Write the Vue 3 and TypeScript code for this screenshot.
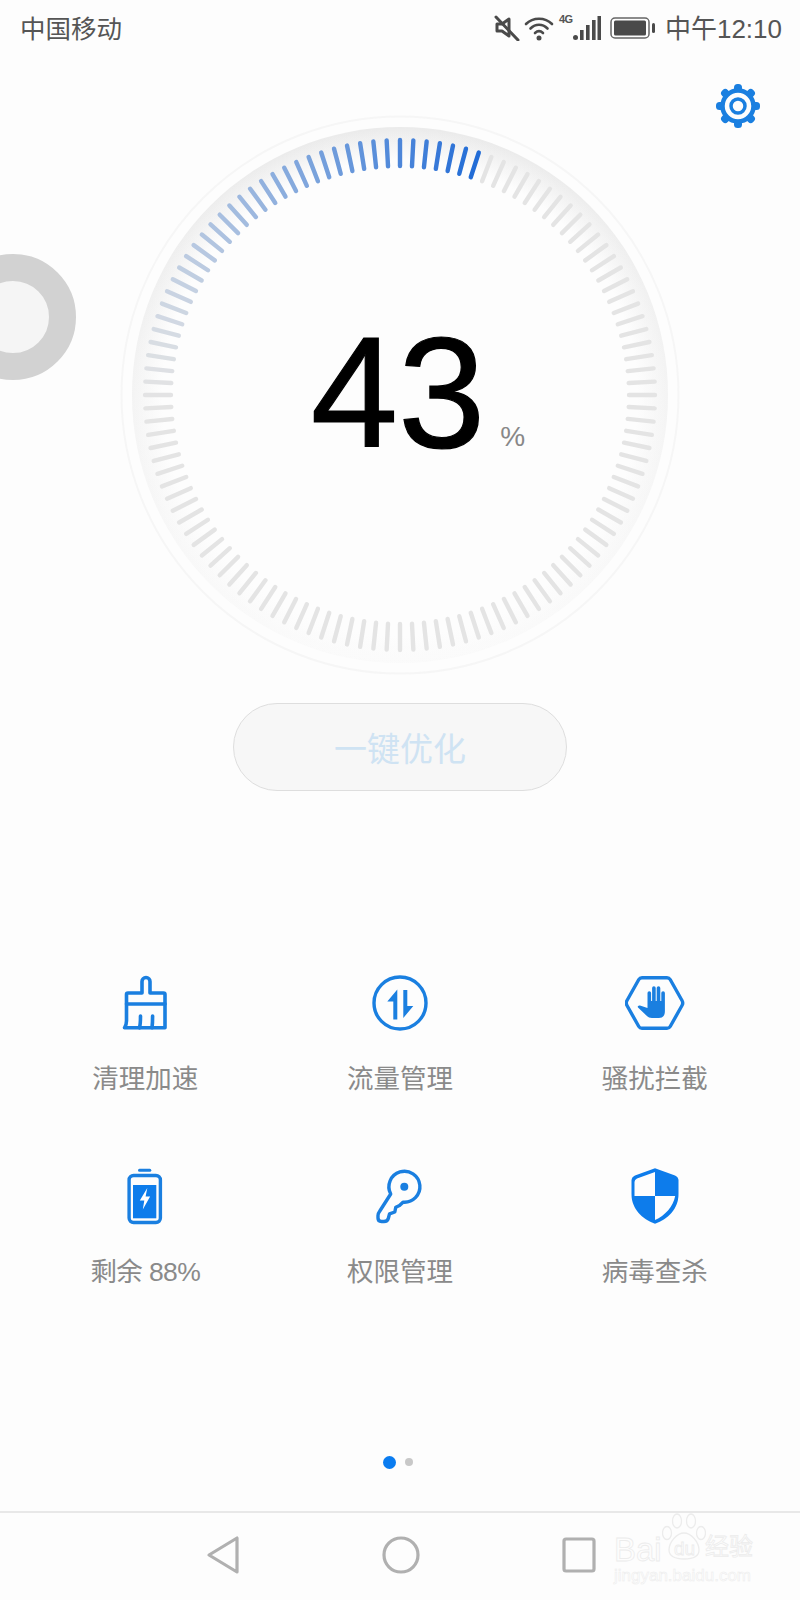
<template>
  <div class="screen">
    <!-- status bar -->
    <div class="status">
      <span class="carrier">中国移动</span>
      <div class="status-right">
        <svg class="ic-mute" width="26" height="26" viewBox="0 0 26 26">
          <path d="M3 9h5l7-5v17l-7-5H3z" fill="none" stroke="#4a4a4a" stroke-width="3" stroke-linejoin="round" />
          <path d="M2 2l22 23" stroke="#4a4a4a" stroke-width="3" stroke-linecap="round" />
        </svg>
        <svg class="ic-wifi" width="30" height="26" viewBox="0 0 30 26">
          <path d="M2 9c7-7 19-7 26 0M6.500 13.500c5-5 12-5 17 0M11 18c2.500-2.300 5.500-2.300 8 0" fill="none" stroke="#4a4a4a" stroke-width="2.600" stroke-linecap="round" />
          <circle cx="15" cy="23" r="2.500" fill="#4a4a4a" />
        </svg>
        <div class="signal">
          <span class="sig-label">4G</span>
          <svg width="28" height="26" viewBox="0 0 28 26">
            <circle cx="2.500" cy="22.500" r="2.500" fill="#4a4a4a" />
            <rect x="7" y="15" width="3.600" height="10" fill="#4a4a4a" />
            <rect x="13" y="10" width="3.600" height="15" fill="#4a4a4a" />
            <rect x="19" y="5" width="3.600" height="20" fill="#4a4a4a" />
            <rect x="24.500" y="1" width="3.500" height="24" fill="#4a4a4a" />
          </svg>
        </div>
        <svg class="ic-batt" width="46" height="24" viewBox="0 0 46 24">
          <rect x="1" y="2" width="38" height="20" rx="4" fill="none" stroke="#666" stroke-width="1.500" />
          <rect x="4" y="4.500" width="32" height="15" rx="1.500" fill="#4a4a4a" />
          <rect x="42" y="7" width="3" height="10" rx="1.500" fill="#4a4a4a" />
        </svg>
        <span class="clock">中午12:10</span>
      </div>
    </div>

    <!-- settings -->
    <div class="gear-row">
      <svg width="46" height="46" viewBox="0 0 46 46">
        <g fill="#1a7fe0">
          <rect v-for="a in gearTeeth" :key="a" x="19" y="1" width="8" height="8" rx="3.500" :transform="`rotate(${a} 23 23)`" />
        </g>
        <circle cx="23" cy="23" r="15.500" fill="none" stroke="#1a7fe0" stroke-width="4.500" />
        <circle cx="23" cy="23" r="7" fill="none" stroke="#1a7fe0" stroke-width="3.500" />
      </svg>
    </div>

    <!-- dial -->
    <div class="dial">
      <svg width="560" height="560" viewBox="0 0 560 560">
        <defs>
          <linearGradient id="bandBase" x1="0" y1="0" x2="0" y2="1">
            <stop offset="0" stop-color="#ebebeb" />
            <stop offset="0.5" stop-color="#f3f3f3" />
            <stop offset="1" stop-color="#fafafa" />
          </linearGradient>
          <radialGradient id="bandFade" gradientUnits="userSpaceOnUse" cx="280" cy="283" r="270">
            <stop offset="0.88" stop-color="#fdfdfd" />
            <stop offset="1" stop-color="#fdfdfd" stop-opacity="0" />
          </radialGradient>
        </defs>
        <circle cx="280" cy="280" r="278.500" fill="none" stroke="#f6f6f6" stroke-width="2" />
        <circle cx="280" cy="280" r="268" fill="url(#bandBase)" />
        <circle cx="280" cy="280" r="268" fill="url(#bandFade)" />
        <line
          v-for="t in ticks"
          :key="t.angle"
          x1="280"
          y1="25"
          x2="280"
          y2="51"
          :stroke="t.color"
          stroke-width="4.400"
          stroke-linecap="round"
          :transform="`rotate(${t.angle} 280 280)`"
        />
      </svg>
      <div class="reading">
        <span class="num">43</span>
        <span class="pct">%</span>
      </div>
    </div>

    <button class="optimize">一键优化</button>

    <!-- tools -->
    <div class="tools">
      <div class="tool">
        <svg width="60" height="60" viewBox="0 0 60 60" fill="none" stroke="#1a7fe0" stroke-width="3.600" stroke-linejoin="round" stroke-linecap="round">
          <g transform="translate(1 0)">
            <path d="M26 20V8.500a4 4 0 0 1 8 0V20h13.500a1.500 1.500 0 0 1 1.500 1.500V54.800H8.500c1.600-2 2-4 2-7V21.500A1.500 1.500 0 0 1 12 20z" />
            <path d="M10.500 31H49M23.500 54.800c.8-3 1-6 1-11.800M36 54.800c.4-3 .6-6 .6-11.800" />
          </g>
        </svg>
        <span>清理加速</span>
      </div>
      <div class="tool">
        <svg width="60" height="60" viewBox="0 0 60 60">
          <circle cx="30" cy="30" r="26" fill="none" stroke="#1a7fe0" stroke-width="3.400" />
          <path d="M27.300 16.500V46.500h-4V28.500h-6z" fill="#1a7fe0" />
          <path d="M33.300 45V17h4V33h6z" fill="#1a7fe0" />
        </svg>
        <span>流量管理</span>
      </div>
      <div class="tool">
        <svg width="60" height="60" viewBox="0 0 60 60">
          <g transform="translate(-1 0)" fill="#1a7fe0">
            <path d="M18 4.700h25c1.500 0 2.500.6 3.200 1.800L58 27.500c1 1.700 1 3.300 0 5L46.200 53.500c-.7 1.200-1.700 1.800-3.200 1.800H18c-1.500 0-2.500-.6-3.200-1.800L3 32.500c-1-1.700-1-3.300 0-5L14.800 6.500c.7-1.200 1.700-1.800 3.200-1.800z" fill="none" stroke="#1a7fe0" stroke-width="3.400" />
            <path d="M23.500 35V20a1.800 1.800 0 0 1 3.600 0v8h1V15a1.800 1.800 0 0 1 3.600 0v13h1V15a1.800 1.800 0 0 1 3.600 0v13h1V20a1.800 1.800 0 0 1 3.600 0v18c0 4-1.500 7-6 7h-7c-2.500 0-4-1-5.500-2.500L14 34.500c-1-1.200.7-2.500 2-2z" />
          </g>
        </svg>
        <span>骚扰拦截</span>
      </div>
      <div class="tool">
        <svg width="60" height="60" viewBox="0 0 60 60">
          <g transform="translate(1.300 0)">
            <rect x="21.700" y="2.700" width="13.300" height="3" rx="1.500" fill="#1a7fe0" />
            <rect x="12.800" y="9.500" width="31.300" height="47" rx="4.500" fill="none" stroke="#1a7fe0" stroke-width="3.400" />
            <rect x="16.700" y="19" width="23.300" height="33.300" fill="#0d7ceb" />
            <path d="M31 22L23.500 34.500H28L26.500 43.500L33.800 30.500H29.300z" fill="#fff" />
          </g>
        </svg>
        <span class="tight">剩余 88%</span>
      </div>
      <div class="tool">
        <svg width="60" height="60" viewBox="0 0 60 60">
          <path d="M20.700 28L9.500 45.500Q8 47.500 8 49.500V52Q8 55.500 11.500 55.500H14Q17.500 55.500 18.300 52.500L19.500 47.800L24.800 46L25.800 41.200L29.500 39.500L33 36.200A15.500 15.500 0 1 0 20.700 28z" fill="none" stroke="#1a7fe0" stroke-width="3.400" stroke-linejoin="round" />
          <circle cx="34.300" cy="20.700" r="4" fill="#1a7fe0" />
        </svg>
        <span>权限管理</span>
      </div>
      <div class="tool">
        <svg width="60" height="60" viewBox="0 0 60 60">
          <path d="M30 2.300L50 9.500Q53.500 11 53.500 14.500V28C53.500 43 43 53 30 57.700C17 53 6.500 43 6.500 28V14.500Q6.500 11 10 9.500z" fill="#0d7ceb" />
          <path d="M30 6L12 12.500Q9.500 13.500 9.500 16V30H30zM30 30H50.200C48 41 40 49.500 30 54z" fill="#fdfdfd" />
        </svg>
        <span>病毒查杀</span>
      </div>
    </div>

    <!-- page dots -->
    <div class="dots">
      <i class="dot-on"></i>
      <i class="dot-off"></i>
    </div>

    <!-- nav bar -->
    <div class="nav">
      <svg width="36" height="40" viewBox="0 0 36 40" fill="none" stroke="#b0b0b0" stroke-width="3.200" stroke-linejoin="round">
        <path d="M32 3v34L4 20z" />
      </svg>
      <svg width="38" height="40" viewBox="0 0 38 40" fill="none" stroke="#b0b0b0" stroke-width="3.200">
        <circle cx="19" cy="20" r="17" />
      </svg>
      <svg width="36" height="40" viewBox="0 0 36 40" fill="none" stroke="#b0b0b0" stroke-width="3.200" stroke-linejoin="round">
        <rect x="3" y="4" width="30" height="32" rx="2" />
      </svg>
      <!-- baidu jingyan watermark -->
      <div class="mark">
        <svg class="paw" width="44" height="48" viewBox="0 0 44 48" fill="none" stroke="#ececec" stroke-width="1.300">
          <ellipse cx="5" cy="20" rx="4.500" ry="6.500" />
          <ellipse cx="15" cy="8" rx="4.500" ry="7" />
          <ellipse cx="29" cy="8" rx="4.500" ry="7" />
          <ellipse cx="39" cy="20" rx="4.500" ry="6.500" />
          <path d="M22 20c7 0 15 9 15 17 0 6-6 9-15 9S7 43 7 37c0-8 8-17 15-17z" />
        </svg>
        <div class="mark-bai">Bai</div>
        <div class="mark-du">du</div>
        <div class="mark-cn">经验</div>
        <div class="mark-url">jingyan.baidu.com</div>
      </div>
    </div>

    <!-- floating ball -->
    <div class="ball"></div>
  </div>
</template>

<script setup lang="ts">
const gearTeeth = [0, 45, 90, 135, 180, 225, 270, 315]

const total = 120
const lastBlue = 6 // ticks to the right of 12 o'clock
const fadeLen = 31 // ticks left of top that stay fading

// mixes grey tick colour towards the blue as it nears the end of the arc
const mix = (k: number) => {
  const from = [228, 228, 228]
  const to = [34, 108, 214]
  const c = from.map((v, i) => Math.round(v + (to[i] - v) * k))
  return `rgb(${c[0]},${c[1]},${c[2]})`
}

const ticks = Array.from({ length: total }, (_, i) => {
  // i=0 is straight up, counted clockwise
  const off = i > total / 2 ? i - total : i
  let color = '#e4e4e4'
  if (off <= lastBlue && off >= -fadeLen) {
    const k = (off + fadeLen) / (lastBlue + fadeLen)
    color = mix(Math.pow(k, 1.4))
  }
  return { angle: i * 3, color }
})
</script>

<style scoped>
.screen {
  position: relative;
  width: 800px;
  height: 1600px;
  overflow: hidden;
  background: #fdfdfd;
  font-family: "Liberation Sans", "Noto Sans CJK SC", sans-serif;
}
.status {
  height: 56px;
  padding: 0 18px 0 20px;
  display: flex;
  align-items: center;
  justify-content: space-between;
  color: #555;
}
.carrier {
  font-size: 25.500px;
  margin-bottom: 3px;
}
.clock {
  font-size: 26px;
  margin-bottom: 3px;
}
.status-right {
  display: flex;
  align-items: center;
}
.ic-mute { margin-right: 4px; }
.ic-wifi { margin-right: 5px; }
.signal { position: relative; margin-right: 9px; padding-left: 14px; display: flex; }
.sig-label {
  position: absolute;
  left: 0;
  top: -2px;
  font-size: 11px;
  font-weight: 700;
  letter-spacing: -0.500px;
}
.ic-batt { margin-right: 9px; }
.gear-row {
  display: flex;
  justify-content: flex-end;
  height: 59px;
  padding-right: 39px;
  padding-top: 27px;
  box-sizing: border-box;
}
.dial {
  position: relative;
  width: 560px;
  height: 560px;
  margin: 0 auto;
}
.dial svg { display: block; }
.reading {
  position: absolute;
  left: 0;
  right: 0;
  top: 0;
  bottom: 0;
  display: flex;
  align-items: center;
  justify-content: center;
}
.num {
  font-size: 157px;
  line-height: 1;
  color: #000;
  -webkit-text-stroke: 1.200px #000;
  margin: -6px 0 0 -2px;
}
.pct {
  font-size: 28px;
  color: #888;
  align-self: center;
  margin: 84px -38px 0 15px;
}
.optimize {
  display: block;
  width: 334px;
  height: 88px;
  margin: 28px auto 0;
  border: 1.500px solid #dedede;
  border-radius: 44px;
  background: #f7f7f7;
  color: #cfe3f3;
  font-family: inherit;
  font-size: 33px;
  padding: 0;
}
.tools {
  display: grid;
  grid-template-columns: 1fr 1fr 1fr;
  row-gap: 39px;
  margin-top: 182px;
  padding: 0 18px;
}
.tool {
  display: flex;
  flex-direction: column;
  align-items: center;
  height: 154px;
  color: #8a8a8a;
  font-size: 26.500px;
  white-space: nowrap;
}
.tool svg { margin-bottom: 24px; }
.tight { letter-spacing: -0.600px; }
.dots {
  display: flex;
  justify-content: center;
  align-items: center;
  gap: 9.500px;
  margin-top: 135px;
  height: 14px;
  padding-right: 4.500px;
}
.dot-on {
  width: 13px;
  height: 13px;
  border-radius: 50%;
  background: #0a7cf0;
}
.dot-off {
  width: 8px;
  height: 8px;
  border-radius: 50%;
  background: #c8c8c8;
}
.nav {
  position: relative;
  margin-top: 42px;
  height: 84px;
  padding-bottom: 4px;
  border-top: 2px solid #e8e8e8;
  display: flex;
  align-items: center;
  padding-left: 205px;
  gap: 141px;
}
.mark {
  position: absolute;
  left: 614px;
  top: 0;
  width: 140px;
  height: 74px;
  color: #fdfdfd;
  -webkit-text-stroke: 0.800px #ececec;
  white-space: nowrap;
}
.paw { position: absolute; left: 48px; top: 0; }
.mark-bai {
  position: absolute;
  left: 0;
  top: 20px;
  font-size: 33px;
  line-height: 1;
}
.mark-du {
  position: absolute;
  left: 60px;
  top: 26px;
  font-size: 19px;
  line-height: 1;
}
.mark-cn {
  position: absolute;
  left: 91px;
  top: 22px;
  font-size: 24px;
  line-height: 1;
}
.mark-url {
  position: absolute;
  left: 0;
  top: 54px;
  font-size: 17px;
  line-height: 1;
  -webkit-text-stroke: 0.500px #ececec;
}
.ball {
  position: absolute;
  left: -50px;
  top: 254px;
  width: 72px;
  height: 72px;
  border: 27px solid #d2d2d2;
  border-radius: 50%;
  background: #f5f5f5;
}
</style>
